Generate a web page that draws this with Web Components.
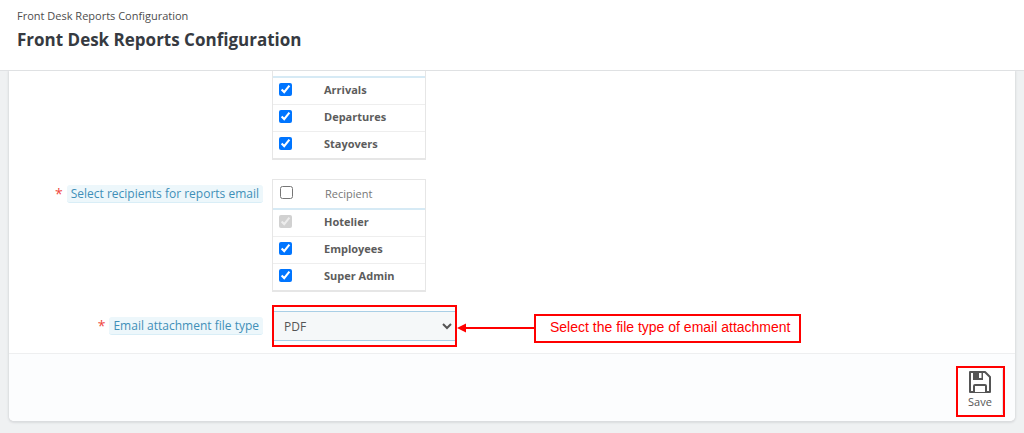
<!DOCTYPE html>
<html lang="en">
<head>
<meta charset="utf-8">
<title>Front Desk Reports Configuration</title>
<style>
html { height: 100%; }
body { margin: 0; min-height: 100%; background: #eff1f2; color: #666; font: 12px/18px "Open Sans", "Noto Sans", sans-serif; }
</style>
</head>
<body>
<reports-page></reports-page>
<script>
const define = (name, html, setup) => {
  const template = document.createElement('template');
  template.innerHTML = html;
  customElements.define(name, class extends HTMLElement {
    constructor() {
      super();
      this.attachShadow({ mode: 'open' }).append(template.content.cloneNode(true));
    }
    connectedCallback() {
      if (setup && !this.ready) { this.ready = true; setup(this, this.shadowRoot); }
    }
  });
};

define('page-header', `
<style>
:host { display: block; box-sizing: border-box; padding: 7px 17px 17px; background: #fff; border-bottom: 1px solid #dfe1e3; }
nav { font-size: 11px; line-height: 18px; color: #4d4d4d; }
h1 { margin: 0; padding-top: 1px; font-size: 17px; line-height: 27px; font-weight: 700; color: #363a41; }
</style>
<nav aria-label="Breadcrumb"><slot name="crumb"></slot></nav>
<h1><slot></slot></h1>`);

define('config-panel', `
<style>
:host { display: block; margin: 0 9px 12px; background: #fff; border-radius: 0 0 5px 5px; box-shadow: 0 1px 2px 1px #dadcde; clip-path: inset(0 -4px -4px -4px); }
footer { display: flex; justify-content: flex-end; padding: 12px 10px 4px; background: #fcfdfe; border-top: 1px solid #eeeff0; border-radius: 0 0 5px 5px; }
</style>
<slot></slot>
<footer><slot name="footer"></slot></footer>`);

define('form-row', `
<style>
:host { display: grid; grid-template-columns: 254px 1fr; column-gap: 9px; align-items: start; }
.label { display: flex; justify-content: flex-end; align-items: center; gap: 4px; padding-top: 6px; }
:host([center]) .label { padding-top: 12px; }
.star { color: #f0483e; font-size: 14px; line-height: 18px; }
:host(:not([required])) .star { display: none; }
</style>
<div class="label"><span class="star" aria-hidden="true">*</span><slot name="label"></slot></div>
<div><slot></slot></div>`);

define('check-table', `
<style>
:host { display: block; width: 154px; }
table { width: 100%; box-sizing: border-box; table-layout: fixed; border-collapse: separate; border-spacing: 0; border: 1px solid #e6e6e6; border-bottom: 2px solid #e6e6e6; font-size: 11px; line-height: 16px; }
.pick { width: 44px; }
th, td { box-sizing: border-box; height: 27px; padding: 0 6px 2px; text-align: left; vertical-align: middle; border-bottom: 1px solid #eee; }
thead th { height: 30px; font-weight: 400; color: #777; border-bottom: 2px solid #d6eaf5; }
thead th:first-child { padding-left: 7px; }
thead th:last-child { padding: 0 0 0 8px; }
tbody th { font-weight: 700; color: #5c5c5c; padding-left: 7px; }
tbody tr:last-child > * { height: 26px; border-bottom: 0; }
input { display: block; width: 13px; height: 13px; margin: 0 0 1px; }
:host([scrolled]) table { border-top: 0; }
:host([scrolled]) thead th { height: 7px; padding: 0; }
</style>
<table><thead><tr></tr></thead><tbody></tbody></table>`, (host, root) => {
  const head = root.querySelector('thead tr');
  const title = host.getAttribute('heading');
  head.innerHTML = title
    ? `<th class="pick"><input type="checkbox" aria-label="Select all"></th><th scope="col"><span>${title}</span></th>`
    : '<th class="pick"></th><th></th>';
  const body = root.querySelector('tbody');
  host.getAttribute('items').split(',').forEach((name, i) => {
    const locked = name === host.getAttribute('locked');
    body.insertAdjacentHTML('beforeend',
      `<tr><td><input type="checkbox" id="c${i}" checked${locked ? ' disabled' : ''}></td><th scope="row"><label for="c${i}">${name}</label></th></tr>`);
  });
});

define('call-out', `
<style>
:host { display: flex; align-items: center; padding-top: 4px; color: #f00; }
svg { display: block; width: 77px; height: 12px; }
p { margin: 0; padding: 0 9px 3px 14px; border: 2px solid #f00; font: 14px/22px "Liberation Sans", Arial, sans-serif; white-space: nowrap; }
</style>
<svg viewBox="0 0 77 12" aria-hidden="true"><path d="M0 6 9 1.500v9z" fill="currentColor"/><path d="M7 6h70" stroke="currentColor" stroke-width="2"/></svg>
<p><slot></slot></p>`);

define('save-button', `
<style>
:host { display: block; border: 2px solid #f00; }
button { display: flex; flex-direction: column; align-items: center; width: 45px; height: 47px; padding: 2px 0 0; border: 0; border-right: 1px solid #e2e4e6; border-radius: 3px; background: #fff; color: #555; font: 11px/16px "Open Sans", "Noto Sans", sans-serif; }
svg { display: block; width: 24px; height: 24px; }
</style>
<button type="submit">
<svg viewBox="0 0 24 24" aria-hidden="true"><path d="M2 2h15l5 5v15H2z" fill="#fff" stroke="#555" stroke-width="2" stroke-linejoin="round"/><path d="M5 2h10v8H5z" fill="#555"/><path d="M11 3h2.500v5H11z" fill="#fff"/><path d="M6 22v-6q0-1 1-1h10q1 0 1 1v6" fill="#fff" stroke="#555" stroke-width="2"/></svg>
<span><slot></slot></span></button>`);

define('reports-page', `
<style>
:host { display: block; }
.fields { display: flex; flex-direction: column; padding-bottom: 6px; }
.recipients { margin: 19px 0 13px; }
label, .tag { padding: 0 4px; background: #edf7fb; border-bottom: 1px solid #d9eef7; border-radius: 3px; color: #3f8fb8; font-size: 12px; line-height: 17px; white-space: nowrap; }
.line { display: flex; align-items: center; }
.frame { box-sizing: border-box; width: 185px; padding: 4px 0; border: 2px solid #f00; background: #fcfdfe; }
select { display: block; box-sizing: border-box; width: 100%; height: 30px; padding: 0 0 0 6px; border: 1px solid #a9cfe6; border-width: 1px 0; border-radius: 0; background: #f5f8f9; color: #555; font: 12px/18px "Open Sans", "Noto Sans", sans-serif; }
</style>
<page-header><span slot="crumb">Front Desk Reports Configuration</span>Front Desk Reports Configuration</page-header>
<config-panel>
  <div class="fields">
    <form-row><check-table scrolled items="Arrivals,Departures,Stayovers"></check-table></form-row>
    <form-row class="recipients" required><span class="tag" slot="label">Select recipients for reports email</span><check-table heading="Recipient" locked="Hotelier" items="Hotelier,Employees,Super Admin"></check-table></form-row>
    <form-row required center><label slot="label" for="type">Email attachment file type</label>
      <div class="line"><div class="frame"><select id="type"><option>PDF</option></select></div><call-out>Select the file type of email attachment</call-out></div>
    </form-row>
  </div>
  <save-button slot="footer">Save</save-button>
</config-panel>`);
</script>
</body>
</html>
